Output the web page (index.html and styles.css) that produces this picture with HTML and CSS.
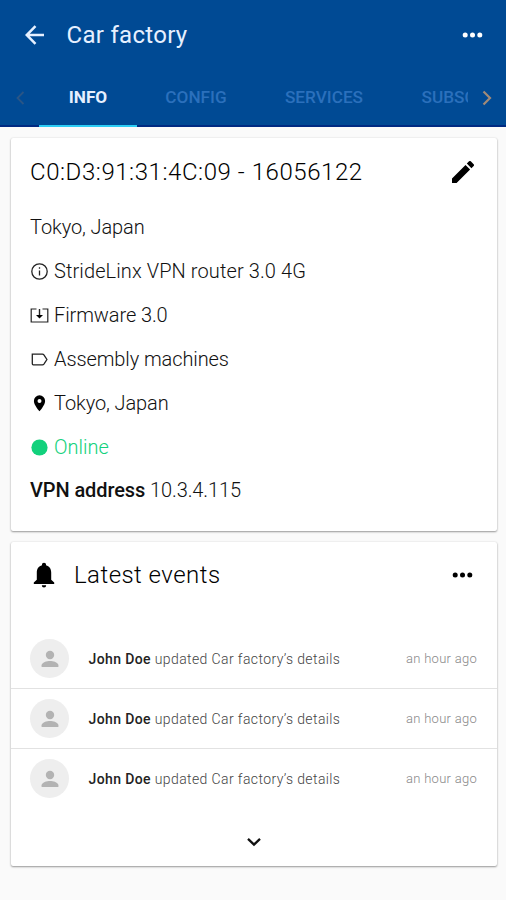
FILE: index.html
```html
<!DOCTYPE html>
<html lang="en">
<head>
<meta charset="utf-8">
<title>Car factory</title>
<link rel="stylesheet" href="styles.css">
</head>
<body>
<header class="header">
  <div class="bar">
    <svg class="back" viewBox="0 0 20 20"><path d="M19 10H2M10.5 1.2 1.7 10l8.8 8.8" fill="none" stroke="currentColor" stroke-width="2.5"/></svg>
    <h1 class="bar-title">Car factory</h1>
    <svg class="dots" viewBox="0 0 20 6"><circle cx="2.7" cy="3" r="2.5"/><circle cx="10" cy="3" r="2.5"/><circle cx="17.3" cy="3" r="2.5"/></svg>
  </div>
  <nav class="tabs">
    <span class="arrow arrow-left"><svg viewBox="0 0 10 16"><path d="M8.5 2 2.5 8l6 6" fill="none" stroke="currentColor" stroke-width="1.8"/></svg></span>
    <div class="tab-strip">
      <a class="tab tab-info active">INFO</a>
      <a class="tab tab-config">CONFIG</a>
      <a class="tab tab-services">SERVICES</a>
      <a class="tab tab-subs">SUBSC</a>
    </div>
    <span class="arrow arrow-right"><svg viewBox="0 0 10 16"><path d="m1.5 1.5 6.5 6.5-6.5 6.5" fill="none" stroke="currentColor" stroke-width="2.2"/></svg></span>
  </nav>
</header>
<main class="content">
  <section class="card device">
    <div class="device-head">
      <h2 class="device-title">C0:D3:91:31:4C:09 - 16056122</h2>
      <svg class="pencil" viewBox="3 3 18 18"><path d="M3 17.25V21h3.75L17.81 9.94l-3.75-3.75L3 17.25zM20.71 7.04a1 1 0 0 0 0-1.41l-2.34-2.34a1 1 0 0 0-1.41 0l-1.83 1.83 3.75 3.75 1.83-1.83z"/></svg>
    </div>
    <p class="row place"><span>Tokyo, Japan</span></p>
    <p class="row model"><svg class="icon" viewBox="0 0 19 19"><circle cx="9.5" cy="9.5" r="7.7" fill="none" stroke="#222" stroke-width="1.3"/><path d="M9.5 8.5v5M9.5 5.2v1.6" stroke="#222" stroke-width="1.3"/></svg><span>StrideLinx VPN router 3.0 4G</span></p>
    <p class="row place"><svg class="icon" viewBox="0 0 19 19"><path d="M6.5 3H1.200v13h16.600V3h-5.300" fill="none" stroke="#222" stroke-width="1.2"/><path d="M9.5 3v7" stroke="#222" stroke-width="1.4"/><path d="m6 9 3.500 3.600L13 9z"/></svg><span>Firmware 3.0</span></p>
    <p class="row place"><svg class="icon" viewBox="0 0 19 19"><path d="M2.300 4.200h10.200c.6 0 1 .2 1.400.7l3 4.600-3 4.600c-.4.5-.8.7-1.400.7H3.300c-.7 0-1-.4-1-1z" fill="none" stroke="#222" stroke-width="1.3"/></svg><span>Assembly machines</span></p>
    <p class="row place"><svg class="icon" viewBox="0 0 19 19"><path fill-rule="evenodd" d="M9.5 1.300A5.600 5.600 0 0 0 3.900 6.900c0 4.200 5.600 10.300 5.600 10.300s5.600-6.100 5.600-10.300a5.600 5.600 0 0 0-5.600-5.600zm0 3.600a2 2 0 1 1 0 4 2 2 0 0 1 0-4z"/></svg><span>Tokyo, Japan</span></p>
    <p class="row online"><svg class="icon" viewBox="0 0 19 19"><circle cx="9.5" cy="9.5" r="8.100"/></svg><span>Online</span></p>
    <p class="row vpn"><span><b>VPN address</b> 10.3.4.115</span></p>
  </section>
  <section class="card events">
    <div class="events-head">
      <svg class="bell" viewBox="0 0 22 26"><path d="M11 .8c-1.200 0-2 .8-2 1.800v.7C5.700 4.100 3.800 7 3.800 10.500v7.200L.8 20.600v1.300h20.400v-1.300l-3-2.900v-7.200c0-3.500-1.900-6.400-5.200-7.200v-.7c0-1-.8-1.800-2-1.800zM8.800 23.200a2.200 2.200 0 0 0 4.400 0z"/></svg>
      <h2 class="events-title">Latest events</h2>
      <svg class="dots" viewBox="0 0 20 6"><circle cx="2.7" cy="3" r="2.5"/><circle cx="10" cy="3" r="2.5"/><circle cx="17.3" cy="3" r="2.5"/></svg>
    </div>
    <ul class="list">
      <li class="event"><span class="avatar"><svg viewBox="0 0 18 18"><circle cx="9" cy="5" r="4.200"/><path d="M.6 17v-1.700C.6 12.500 6 11 9 11s8.400 1.500 8.400 4.300V17z"/></svg></span><span class="msg"><b>John Doe</b> updated Car factory’s details</span><span class="time">an hour ago</span></li>
      <li class="event"><span class="avatar"><svg viewBox="0 0 18 18"><circle cx="9" cy="5" r="4.200"/><path d="M.6 17v-1.700C.6 12.500 6 11 9 11s8.400 1.500 8.400 4.300V17z"/></svg></span><span class="msg"><b>John Doe</b> updated Car factory’s details</span><span class="time">an hour ago</span></li>
      <li class="event"><span class="avatar"><svg viewBox="0 0 18 18"><circle cx="9" cy="5" r="4.200"/><path d="M.6 17v-1.700C.6 12.500 6 11 9 11s8.400 1.500 8.400 4.300V17z"/></svg></span><span class="msg"><b>John Doe</b> updated Car factory’s details</span><span class="time">an hour ago</span></li>
    </ul>
    <div class="more"><svg viewBox="0 0 16 10"><path d="m2 1.800 6 5.800 6-5.800" fill="none" stroke="#111" stroke-width="2.300"/></svg></div>
  </section>
</main>
</body>
</html>
```

FILE: styles.css
```css
* { box-sizing: border-box; }
body {
  margin: 0;
  height: 900px;
  overflow: hidden;
  background: #fafafa;
  color: #111;
  font-family: Roboto, "Liberation Sans", sans-serif;
}
h1, h2, p, ul { margin: 0; padding: 0; font-weight: 400; }
svg { display: block; flex: none; }

.header { height: 127px; background: #004a94; color: #e6f0ff; }
.bar { display: flex; align-items: center; height: 70px; padding: 0 23px 0 25px; }
.back { width: 20px; height: 20px; }
.bar-title { flex: 1; margin-left: 21.5px; font-size: 24px; line-height: 70px; letter-spacing: .3px; }
.dots { width: 21px; height: 6px; fill: currentColor; }
.bar .dots { color: #fff; }

.tabs { display: flex; height: 57px; border-bottom: 2px solid #002a82; }
.arrow { display: flex; align-items: center; justify-content: center; width: 39px; }
.arrow svg { width: 10px; height: 16px; }
.arrow-left { color: #2a5686; }
.arrow-right { width: 38px; color: #a08a78; }
.tab-strip { display: flex; flex: 1; height: 57px; overflow: hidden; }
.tab {
  flex: none;
  height: 57px;
  line-height: 55px;
  text-align: center;
  font-size: 17.2px;
  font-weight: 500;
  color: #2b70bc;
}
.tab-info { width: 98px; }
.tab-config { width: 118px; }
.tab-services { width: 138px; }
.tab-subs { padding-left: 28.5px; }
.active { color: #e6f0ff; font-weight: 700; border-bottom: 2px solid #2ccdf5; }

.content { display: flex; flex-direction: column; gap: 11px; padding: 11px 9px 0 11px; }
.card {
  background: #fff;
  border-radius: 2px;
  box-shadow: 0 1px 2px rgba(0, 0, 0, .38), 0 0 2px rgba(0, 0, 0, .1);
}
.device { height: 393px; padding: 0 19px; }
.device-head { display: flex; align-items: center; justify-content: space-between; height: 67px; padding-right: 4px; }
.device-title { font-size: 24px; font-weight: 300; letter-spacing: .56px; color: #000; }
.pencil { width: 22px; height: 22px; fill: #000; }
.row { display: flex; align-items: center; gap: 5px; height: 44px; font-size: 20px; font-weight: 300; white-space: nowrap; }
.place { letter-spacing: -.1px; }
.model { letter-spacing: .1px; }
.icon { width: 19px; height: 19px; }
.online { color: #12d17c; }
.online .icon { fill: currentColor; }
.vpn { height: 42px; letter-spacing: -.1px; }
.vpn b { font-weight: 500; }

.events { height: 324px; }
.events-head { display: flex; align-items: center; height: 66px; padding: 0 24px 0 22px; }
.bell { width: 22px; height: 26px; fill: #000; }
.events-title { flex: 1; margin-left: 19px; font-size: 24px; font-weight: 300; letter-spacing: .46px; color: #000; }
.events-head .dots { color: #000; }
.list { padding-top: 21px; list-style: none; }
.event { display: flex; align-items: center; height: 60px; padding: 0 20px 0 19px; border-bottom: 1.5px solid #e2e2e2; font-size: 14px; }
.event:last-child { border-bottom: 0; padding-bottom: 1px; }
.avatar { display: flex; align-items: center; justify-content: center; width: 39px; height: 39px; border-radius: 50%; background: #eee; }
.avatar svg { width: 18px; height: 18px; fill: #b3b3b3; }
.msg { flex: 1; margin-left: 19.5px; color: #444; font-weight: 300; letter-spacing: .39px; white-space: nowrap; }
.msg b { font-weight: 500; color: #222; }
.time { font-size: 13px; font-weight: 300; letter-spacing: .28px; color: #888; white-space: nowrap; }
.more { display: flex; justify-content: center; padding-top: 28px; }
.more svg { width: 16px; height: 10px; }
```
